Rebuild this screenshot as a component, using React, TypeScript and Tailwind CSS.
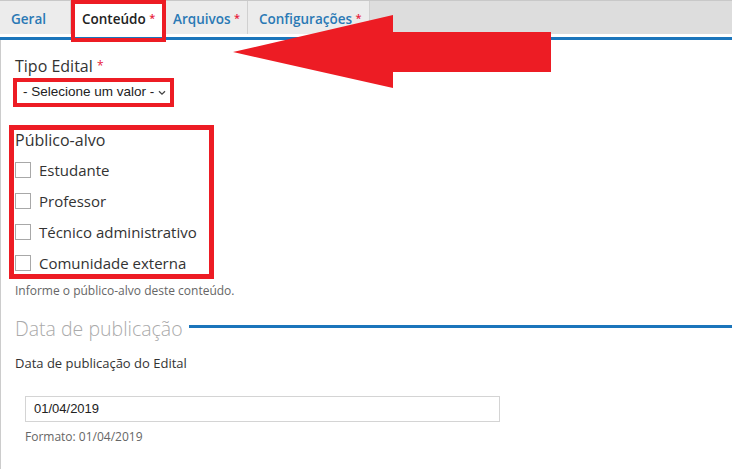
import React from "react";

const Star = ({ cls = "" }: { cls?: string }) => (
  <span className={`text-[#e8203a] text-[11px] ${cls}`}>*</span>
);

const Check = ({ label }: { label: string }) => (
  <div className="flex h-[31px] items-center">
    <span className="block h-[16px] w-[16px] border border-[#a8a8a8] bg-white" />
    <span className="ml-[8px] text-[15px] leading-[20px] text-[#333]">{label}</span>
  </div>
);

export default function App() {
  return (
    <div className="relative h-[469px] w-[732px] overflow-hidden bg-white font-['Open_Sans',sans-serif]">
      {/* tab bar */}
      <div className="flex h-[34px] border-t border-[#c8c8c8] bg-[#dddddd]">
        <div className="flex w-[71px] items-center border-r border-[#d0d0d0] bg-[#ececec] pl-[11px] pt-[4px] text-[13.5px] font-semibold text-[#2a79b5]">
          Geral
        </div>
        <div className="flex w-[92px] items-center bg-white pl-[11px] pt-[4px] text-[13.5px] font-semibold text-[#222]">
          Conteúdo&nbsp;<Star cls="-mt-[3px]" />
        </div>
        <div className="flex w-[85px] items-center border-r border-[#d0d0d0] bg-[#ececec] pl-[10px] pt-[4px] text-[13.5px] font-semibold text-[#2a79b5]">
          Arquivos&nbsp;<Star cls="-mt-[3px]" />
        </div>
        <div className="flex w-[122px] items-center border-r border-[#d0d0d0] bg-[#ececec] pl-[11px] pt-[4px] text-[13.5px] font-semibold text-[#2a79b5]">
          Configurações&nbsp;<Star cls="-mt-[3px]" />
        </div>
      </div>
      <div className="h-[3px] bg-white" />
      <div className="h-[3px] bg-[#1b75bb]" />

      {/* content */}
      <div className="h-[429px] border-l border-[#cccccc] pl-[14px]">
        <div className="pt-[15px] text-[16px] leading-[22px] text-[#333]">
          Tipo Edital <span className="align-top text-[12px] text-[#e8203a]">*</span>
        </div>
        <div className="mt-[1px] -ml-[2px] inline-flex h-[29px] items-center border-[4px] border-[#ed1c24] bg-white pl-[6px] pr-[4px] font-['Liberation_Sans',sans-serif] text-[13.5px] text-[#222]">
          - Selecione um valor -
          <svg className="ml-[4px]" width="8" height="6" viewBox="0 0 8 6">
            <path d="M1 1.2 L4 4.2 L7 1.2" fill="none" stroke="#444" strokeWidth="1.3" />
          </svg>
        </div>

        <div className="mt-[22px] text-[16px] leading-[22px] text-[#333]">Público-alvo</div>
        <div className="mt-[3px]">
          <Check label="Estudante" />
          <Check label="Professor" />
          <Check label="Técnico administrativo" />
          <Check label="Comunidade externa" />
        </div>
        <div className="mt-[4px] text-[12px] leading-[18px] text-[#666]">
          Informe o público-alvo deste conteúdo.
        </div>

        <div className="mt-[15px] flex items-start">
          <div className="text-[19.5px] font-light leading-[28px] text-[#aaaaaa]">Data de publicação</div>
          <div className="ml-[6px] mt-[10px] h-[3px] flex-1 bg-[#1b75bb]" />
        </div>

        <div className="mt-[11px] text-[13px] leading-[18px] text-[#333]">Data de publicação do Edital</div>

        <div className="ml-[10px] mt-[24px] flex h-[26px] w-[475px] items-center border border-[#d4d4d4] bg-white pl-[8px] font-['Liberation_Sans',sans-serif] text-[13px] text-[#222]">
          01/04/2019
        </div>
        <div className="ml-[10px] mt-[7px] text-[12px] leading-[16px] text-[#666]">Formato: 01/04/2019</div>
      </div>

      {/* annotations */}
      <div className="pointer-events-none absolute left-[71px] top-0 h-[42px] w-[95px] border-[4px] border-[#ed1c24]" />
      <div className="pointer-events-none absolute left-[9px] top-[125px] h-[154px] w-[205px] border-[5px] border-[#ed1c24]" />
      <svg className="pointer-events-none absolute left-0 top-0" width="732" height="469">
        <polygon points="233,52 393,15 393,32 551,32 551,72 393,72 393,88" fill="#ed1c24" />
      </svg>
    </div>
  );
}
